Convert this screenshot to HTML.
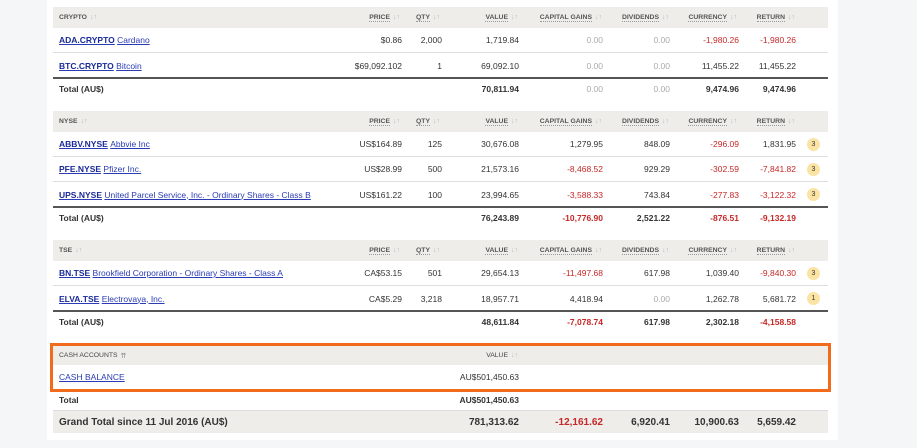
<!DOCTYPE html>
<html><head><meta charset="utf-8"><style>
*{margin:0;padding:0;box-sizing:border-box}
body{width:917px;height:448px;background:#f5f6f8;font-family:"Liberation Sans",Arial,sans-serif;font-size:8.5px;color:#333;position:relative;overflow:hidden}
.panel{position:absolute;left:47px;top:0;width:791px;height:440px;background:#fff}
.r{position:absolute;left:53px;width:775px}
.h{background:#eeedea;height:21px;font-size:6.8px;font-weight:bold;color:#555}
.d{border-bottom:1px solid #ddd;height:25px}
.t{height:22px;font-weight:bold;border-top:2px solid #555}
.c{position:absolute;top:0;height:100%;display:flex;align-items:center;white-space:nowrap}
.rt{justify-content:flex-end}
.ar{color:#bbb;font-weight:normal;margin-left:3px;font-size:7px}
.u{border-bottom:1px dotted #999}
a{color:#2a3bb5;text-decoration:underline}
a b{color:#1a2a9a}
.red{color:#c62828}
.g{color:#aaa}
.bd{position:absolute;width:13px;height:13px;border-radius:50%;background:#fbe3a3;font-size:7px;display:flex;align-items:center;justify-content:center;top:6px;left:754px}
</style></head><body>
<div class="panel"></div>

<!-- CRYPTO -->
<div class="r h" style="top:7px">
<div class="c" style="left:6px">CRYPTO<span class="ar">↓↑</span></div>
<div class="c rt" style="right:428px"><span class="u">PRICE</span><span class="ar">↓↑</span></div>
<div class="c rt" style="right:388px"><span class="u">QTY</span><span class="ar">↓↑</span></div>
<div class="c rt" style="right:310px"><span class="u">VALUE</span><span class="ar">↓↑</span></div>
<div class="c rt" style="right:226px"><span class="u">CAPITAL GAINS</span><span class="ar">↓↑</span></div>
<div class="c rt" style="right:159px"><span class="u">DIVIDENDS</span><span class="ar">↓↑</span></div>
<div class="c rt" style="right:91px"><span class="u">CURRENCY</span><span class="ar">↓↑</span></div>
<div class="c rt" style="right:33px"><span class="u">RETURN</span><span class="ar">↓↑</span></div>
</div>
<div class="r d" style="top:28px">
<div class="c" style="left:6px"><a><b>ADA.CRYPTO</b></a>&nbsp;<a>Cardano</a></div>
<div class="c rt" style="right:426px">$0.86</div><div class="c rt" style="right:386px">2,000</div>
<div class="c rt" style="right:309px">1,719.84</div><div class="c rt g" style="right:225px">0.00</div>
<div class="c rt g" style="right:158px">0.00</div><div class="c rt red" style="right:89px">-1,980.26</div>
<div class="c rt red" style="right:32px">-1,980.26</div></div>
<div class="r d" style="top:53px;border-bottom:none">
<div class="c" style="left:6px"><a><b>BTC.CRYPTO</b></a>&nbsp;<a>Bitcoin</a></div>
<div class="c rt" style="right:426px">$69,092.102</div><div class="c rt" style="right:386px">1</div>
<div class="c rt" style="right:309px">69,092.10</div><div class="c rt g" style="right:225px">0.00</div>
<div class="c rt g" style="right:158px">0.00</div><div class="c rt" style="right:89px">11,455.22</div>
<div class="c rt" style="right:32px">11,455.22</div></div>
<div class="r t" style="top:77px">
<div class="c" style="left:6px">Total (AU$)</div>
<div class="c rt" style="right:309px">70,811.94</div><div class="c rt g" style="right:225px;font-weight:normal">0.00</div>
<div class="c rt g" style="right:158px;font-weight:normal">0.00</div><div class="c rt" style="right:89px">9,474.96</div>
<div class="c rt" style="right:32px">9,474.96</div></div>

<!-- NYSE -->
<div class="r h" style="top:111px">
<div class="c" style="left:6px">NYSE<span class="ar">↓↑</span></div>
<div class="c rt" style="right:428px"><span class="u">PRICE</span><span class="ar">↓↑</span></div>
<div class="c rt" style="right:388px"><span class="u">QTY</span><span class="ar">↓↑</span></div>
<div class="c rt" style="right:310px"><span class="u">VALUE</span><span class="ar">↓↑</span></div>
<div class="c rt" style="right:226px"><span class="u">CAPITAL GAINS</span><span class="ar">↓↑</span></div>
<div class="c rt" style="right:159px"><span class="u">DIVIDENDS</span><span class="ar">↓↑</span></div>
<div class="c rt" style="right:91px"><span class="u">CURRENCY</span><span class="ar">↓↑</span></div>
<div class="c rt" style="right:33px"><span class="u">RETURN</span><span class="ar">↓↑</span></div>
</div>
<div class="r d" style="top:132px">
<div class="c" style="left:6px"><a><b>ABBV.NYSE</b></a>&nbsp;<a>Abbvie Inc</a></div>
<div class="c rt" style="right:426px">US$164.89</div><div class="c rt" style="right:386px">125</div>
<div class="c rt" style="right:309px">30,676.08</div><div class="c rt" style="right:225px">1,279.95</div>
<div class="c rt" style="right:158px">848.09</div><div class="c rt red" style="right:89px">-296.09</div>
<div class="c rt" style="right:32px">1,831.95</div><div class="bd">3</div></div>
<div class="r d" style="top:157px">
<div class="c" style="left:6px"><a><b>PFE.NYSE</b></a>&nbsp;<a>Pfizer Inc.</a></div>
<div class="c rt" style="right:426px">US$28.99</div><div class="c rt" style="right:386px">500</div>
<div class="c rt" style="right:309px">21,573.16</div><div class="c rt red" style="right:225px">-8,468.52</div>
<div class="c rt" style="right:158px">929.29</div><div class="c rt red" style="right:89px">-302.59</div>
<div class="c rt red" style="right:32px">-7,841.82</div><div class="bd">3</div></div>
<div class="r d" style="top:182px;border-bottom:none">
<div class="c" style="left:6px"><a><b>UPS.NYSE</b></a>&nbsp;<a>United Parcel Service, Inc. - Ordinary Shares - Class B</a></div>
<div class="c rt" style="right:426px">US$161.22</div><div class="c rt" style="right:386px">100</div>
<div class="c rt" style="right:309px">23,994.65</div><div class="c rt red" style="right:225px">-3,588.33</div>
<div class="c rt" style="right:158px">743.84</div><div class="c rt red" style="right:89px">-277.83</div>
<div class="c rt red" style="right:32px">-3,122.32</div><div class="bd">3</div></div>
<div class="r t" style="top:206px">
<div class="c" style="left:6px">Total (AU$)</div>
<div class="c rt" style="right:309px">76,243.89</div><div class="c rt red" style="right:225px">-10,776.90</div>
<div class="c rt" style="right:158px">2,521.22</div><div class="c rt red" style="right:89px">-876.51</div>
<div class="c rt red" style="right:32px">-9,132.19</div></div>

<!-- TSE -->
<div class="r h" style="top:240px">
<div class="c" style="left:6px">TSE<span class="ar">↓↑</span></div>
<div class="c rt" style="right:428px"><span class="u">PRICE</span><span class="ar">↓↑</span></div>
<div class="c rt" style="right:388px"><span class="u">QTY</span><span class="ar">↓↑</span></div>
<div class="c rt" style="right:310px"><span class="u">VALUE</span><span class="ar">↓↑</span></div>
<div class="c rt" style="right:226px"><span class="u">CAPITAL GAINS</span><span class="ar">↓↑</span></div>
<div class="c rt" style="right:159px"><span class="u">DIVIDENDS</span><span class="ar">↓↑</span></div>
<div class="c rt" style="right:91px"><span class="u">CURRENCY</span><span class="ar">↓↑</span></div>
<div class="c rt" style="right:33px"><span class="u">RETURN</span><span class="ar">↓↑</span></div>
</div>
<div class="r d" style="top:261px">
<div class="c" style="left:6px"><a><b>BN.TSE</b></a>&nbsp;<a>Brookfield Corporation - Ordinary Shares - Class A</a></div>
<div class="c rt" style="right:426px">CA$53.15</div><div class="c rt" style="right:386px">501</div>
<div class="c rt" style="right:309px">29,654.13</div><div class="c rt red" style="right:225px">-11,497.68</div>
<div class="c rt" style="right:158px">617.98</div><div class="c rt" style="right:89px">1,039.40</div>
<div class="c rt red" style="right:32px">-9,840.30</div><div class="bd">3</div></div>
<div class="r d" style="top:286px;border-bottom:none">
<div class="c" style="left:6px"><a><b>ELVA.TSE</b></a>&nbsp;<a>Electrovaya, Inc.</a></div>
<div class="c rt" style="right:426px">CA$5.29</div><div class="c rt" style="right:386px">3,218</div>
<div class="c rt" style="right:309px">18,957.71</div><div class="c rt" style="right:225px">4,418.94</div>
<div class="c rt g" style="right:158px">0.00</div><div class="c rt" style="right:89px">1,262.78</div>
<div class="c rt" style="right:32px">5,681.72</div><div class="bd">1</div></div>
<div class="r t" style="top:310px">
<div class="c" style="left:6px">Total (AU$)</div>
<div class="c rt" style="right:309px">48,611.84</div><div class="c rt red" style="right:225px">-7,078.74</div>
<div class="c rt" style="right:158px">617.98</div><div class="c rt" style="right:89px">2,302.18</div>
<div class="c rt red" style="right:32px">-4,158.58</div></div>

<!-- CASH -->
<div style="position:absolute;left:50px;top:343px;width:781px;height:49px;border:3px solid #f26a1b"></div>
<div class="r h" style="top:346px;height:19px;font-weight:normal;color:#444">
<div class="c" style="left:6px">CASH ACCOUNTS<span class="ar" style="color:#888">⇈</span></div>
<div class="c rt" style="right:310px">VALUE<span class="ar">↓↑</span></div></div>
<div class="r" style="top:365px;height:24px">
<div class="c" style="left:6px"><a>CASH BALANCE</a></div>
<div class="c rt" style="right:309px">AU$501,450.63</div></div>
<div class="r" style="top:390px;height:21px;font-weight:bold;border-bottom:1px solid #ddd">
<div class="c" style="left:6px">Total</div>
<div class="c rt" style="right:309px">AU$501,450.63</div></div>
<div class="r" style="top:411px;height:22px;background:#eeedea;font-weight:bold;font-size:10px">
<div class="c" style="left:6px">Grand Total since 11 Jul 2016 (AU$)</div>
<div class="c rt" style="right:309px">781,313.62</div><div class="c rt red" style="right:225px">-12,161.62</div>
<div class="c rt" style="right:158px">6,920.41</div><div class="c rt" style="right:89px">10,900.63</div>
<div class="c rt" style="right:32px">5,659.42</div></div>
</body></html>
